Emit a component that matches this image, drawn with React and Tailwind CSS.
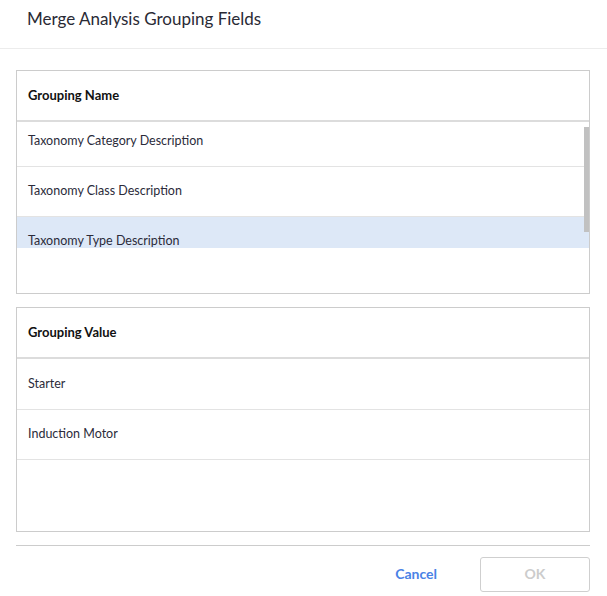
import React from "react";

const font = { fontFamily: "Lato, 'Noto Sans', sans-serif" };

function Row({ children, selected, last }) {
  return (
    <div
      className={`h-[50px] flex items-center px-[11px] text-[12.5px] text-[#2b2b3a] ${
        last ? "" : "border-b border-[#e3e3e3]"
      } ${selected ? "bg-[#dde8f7]" : ""}`}
    >
      {children}
    </div>
  );
}

function PanelHeader({ children }) {
  return (
    <div className="h-[51px] flex items-center px-[11px] border-b-2 border-[#dcdcdc] text-[13px] font-bold text-[#111]">
      {children}
    </div>
  );
}

export default function App() {
  return (
    <div className="w-[607px] h-[596px] bg-white flex flex-col" style={font}>
      <div className="h-[49px] shrink-0 border-b border-[#ececec] px-[27px] pt-[6px] text-[17px] leading-[26px] text-[#2a2a35]">
        Merge Analysis Grouping Fields
      </div>
      <div className="px-[16px] pr-[17px] flex flex-col">
        <div className="mt-[21px] h-[224px] border border-[#cccccc] flex flex-col">
          <PanelHeader>Grouping Name</PanelHeader>
          <div className="relative h-[126px] overflow-hidden">
            <div className="-mt-[5px]">
              <Row>Taxonomy Category Description</Row>
              <Row>Taxonomy Class Description</Row>
              <Row selected>Taxonomy Type Description</Row>
            </div>
            <div className="absolute right-0 top-[5px] w-[5px] h-[105px] bg-[#c1c1c1]" />
          </div>
        </div>
        <div className="mt-[13px] h-[225px] border border-[#cccccc] flex flex-col">
          <PanelHeader>Grouping Value</PanelHeader>
          <div className="mt-[1px]">
            <Row>Starter</Row>
            <Row>Induction Motor</Row>
          </div>
        </div>
        <div className="mt-[13px] h-px bg-[#cccccc]" />
        <div className="mt-[11px] flex items-center justify-end">
          <button className="mr-[43px] pb-[3px] text-[14px] font-bold text-[#4a82e6]">Cancel</button>
          <button className="w-[110px] h-[35px] border border-[#cfcfcf] rounded-[3px] pb-[2px] text-[14px] font-bold text-[#cccccc]">
            OK
          </button>
        </div>
      </div>
    </div>
  );
}
